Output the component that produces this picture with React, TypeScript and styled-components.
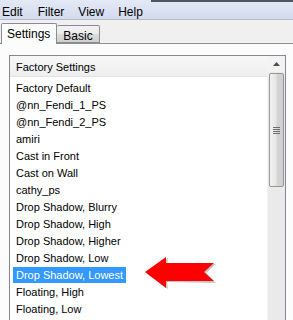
import React from "react"
import styled, { createGlobalStyle } from "styled-components"

const GlobalStyle = createGlobalStyle`
  html, body {
    margin: 0;
    padding: 0;
    background: #f0f0f0;
    overflow: hidden;
  }
  body {
    font-family: "Liberation Sans", Arial, sans-serif;
    color: #000;
  }
`

const Window = styled.div`
  position: relative;
  width: 293px;
  height: 320px;
  overflow: hidden;
  display: flex;
  flex-direction: column;
`

const MenuBar = styled.div`
  flex-shrink: 0;
  height: 19px;
  display: flex;
  align-items: center;
  background: linear-gradient(180deg, #e4e9f5 0%, #dbe2f2 50%, #d3dbee 100%);
  border-bottom: 1px solid #b6bcc6;
  font-size: 12px;
`

const MenuItem = styled.span<{ $gap: number }>`
  margin-left: ${(p) => p.$gap}px;
  padding-top: 4px;
`

const TopEdge = styled.div`
  flex: 1;
  align-self: flex-start;
  height: 2px;
  margin-left: 8px;
  background: #4a5860;
`

const TabStrip = styled.div`
  flex-shrink: 0;
  height: 23px;
  display: flex;
  align-items: flex-end;
  padding-left: 1px;
  border-bottom: 1px solid #8c8e94;
  background: #f0f0f0;
`

const Tab = styled.div<{ $active?: boolean }>`
  box-sizing: border-box;
  height: ${(p) => (p.$active ? 21 : 18)}px;
  margin-bottom: ${(p) => (p.$active ? -1 : 0)}px;
  padding: ${(p) => (p.$active ? "3px 6px 0 5px" : "3px 6px 0 6px")};
  font-size: 12px;
  border: 1px solid #898c95;
  border-bottom: ${(p) => (p.$active ? "none" : "1px solid #898c95")};
  border-left: ${(p) => (p.$active ? "1px solid #898c95" : "none")};
  border-radius: 2px 2px 0 0;
  background: ${(p) =>
    p.$active
      ? "#fcfcfc"
      : "linear-gradient(180deg, #f2f2f2 0%, #ebebeb 50%, #dddddd 51%, #cfcfcf 100%)"};
  position: relative;
  z-index: ${(p) => (p.$active ? 2 : 1)};
`

const Panel = styled.div`
  flex: 1;
  min-height: 0;
  overflow: hidden;
  background: #fcfcfc;
  padding: 11px 7px 0 9px;
  display: flex;
`

const ListBox = styled.div`
  flex: 1;
  border: 1px solid #828790;
  border-bottom: none;
  background: #fff;
  display: flex;
`

const ListColumn = styled.div`
  flex: 1;
  display: flex;
  flex-direction: column;
`

const Header = styled.div`
  flex-shrink: 0;
  height: 21px;
  display: flex;
  align-items: center;
  padding: 1px 0 0 6px;
  box-sizing: border-box;
  font-size: 11px;
  background: linear-gradient(180deg, #f7f7f7 0%, #eeeeee 100%);
  border-bottom: 1px solid #e3e3e3;
`

const Rows = styled.div`
  padding-top: 2px;
  display: flex;
  flex-direction: column;
`

const Row = styled.div`
  flex-shrink: 0;
  height: 17px;
  display: flex;
  align-items: center;
  padding-left: 3px;
`

const RowLabel = styled.span<{ $selected?: boolean }>`
  font-size: 11px;
  line-height: 16px;
  padding: 0 3px;
  background: ${(p) => (p.$selected ? "#3399ff" : "transparent")};
  color: ${(p) => (p.$selected ? "#fff" : "#000")};
`

const Scrollbar = styled.div`
  width: 17px;
  display: flex;
  flex-direction: column;
  background: #eaeaea;
  border-left: 1px solid #f4f4f4;
`

const ScrollButton = styled.div`
  flex-shrink: 0;
  height: 16px;
  display: flex;
  align-items: center;
  justify-content: center;
  background: #f3f3f3;
`

const Thumb = styled.div`
  flex-shrink: 0;
  margin: 1px 1px 0 1px;
  height: 112px;
  border: 1px solid #979797;
  border-radius: 2px;
  background: linear-gradient(90deg, #f2f2f2 0%, #e6e6e6 45%, #d4d4d4 55%, #cfcfcf 100%);
  display: flex;
  align-items: center;
  justify-content: center;
`

const Grip = styled.div`
  width: 7px;
  height: 7px;
  background: repeating-linear-gradient(180deg, #6f6f6f 0 1px, transparent 1px 2px);
`

const Arrow = styled.svg`
  position: absolute;
  left: 140px;
  top: 252px;
`

const items = [
  "Factory Default",
  "@nn_Fendi_1_PS",
  "@nn_Fendi_2_PS",
  "amiri",
  "Cast in Front",
  "Cast on Wall",
  "cathy_ps",
  "Drop Shadow, Blurry",
  "Drop Shadow, High",
  "Drop Shadow, Higher",
  "Drop Shadow, Low",
  "Drop Shadow, Lowest",
  "Floating, High",
  "Floating, Low",
]

export default function App() {
  return (
    <>
      <GlobalStyle />
      <Window>
        <MenuBar>
          <MenuItem $gap={2}>Edit</MenuItem>
          <MenuItem $gap={15}>Filter</MenuItem>
          <MenuItem $gap={14}>View</MenuItem>
          <MenuItem $gap={14}>Help</MenuItem>
          <TopEdge />
        </MenuBar>
        <TabStrip>
          <Tab $active>Settings</Tab>
          <Tab>Basic</Tab>
        </TabStrip>
        <Panel>
          <ListBox>
            <ListColumn>
              <Header>Factory Settings</Header>
              <Rows>
                {items.map((name) => (
                  <Row key={name}>
                    <RowLabel $selected={name === "Drop Shadow, Lowest"}>{name}</RowLabel>
                  </Row>
                ))}
              </Rows>
            </ListColumn>
            <Scrollbar>
              <ScrollButton>
                <svg width="7" height="4" viewBox="0 0 7 4">
                  <path d="M0 4 L3.5 0 L7 4 Z" fill="#4d4d4d" />
                </svg>
              </ScrollButton>
              <Thumb>
                <Grip />
              </Thumb>
            </Scrollbar>
          </ListBox>
        </Panel>
        <Arrow width="80" height="40" viewBox="0 0 80 40">
          <path
            d="M6 21 L27 5 L26 12 L75 11 L65 20 L75 30 L26 29 L27 36 Z"
            fill="#8a8a8a"
            opacity="0.5"
            transform="translate(1 1)"
          />
          <path d="M5 20 L26 5 L26 11 L74 11 L64 20 L74 29 L26 29 L26 36 Z" fill="#ff0000" />
        </Arrow>
      </Window>
    </>
  )
}
